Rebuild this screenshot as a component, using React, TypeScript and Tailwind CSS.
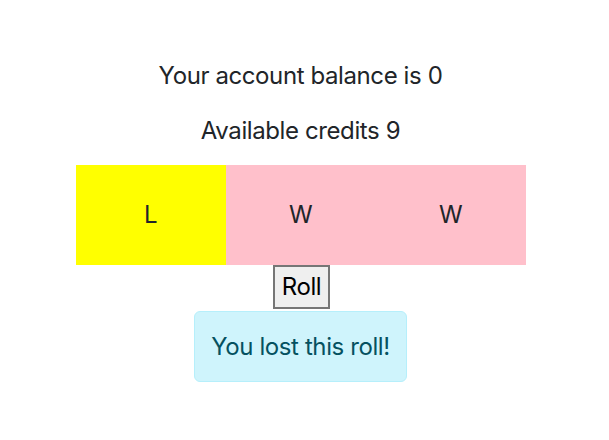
const cells = [
  { label: "L", bg: "bg-[#ffff00]" },
  { label: "W", bg: "bg-[#ffc0cb]" },
  { label: "W", bg: "bg-[#ffc0cb]" },
];

export default function App() {
  return (
    <div className="min-h-screen bg-white font-['Inter',sans-serif] tracking-[-0.4px] text-[#212529] text-[24px] leading-[36px] flex flex-col items-center pt-[58px] pr-[8px]">
      <p className="mb-[19px]">Your account balance is 0</p>
      <p className="mb-[16px]">Available credits 9</p>
      <div className="grid grid-cols-3 w-[450px]">
        {cells.map((c, i) => (
          <div key={i} className={`${c.bg} h-[100px] flex items-center justify-center`}>
            {c.label}
          </div>
        ))}
      </div>
      <button className="ml-[2px] border-2 border-[#767676] bg-[#efefef] text-black px-[7px] py-[2px] leading-[36px]">
        Roll
      </button>
      <div className="mt-[2px] px-4 py-4 leading-[37px] rounded-md border border-[#b6effb] bg-[#cff4fc] text-[#055160]">
        You lost this roll!
      </div>
    </div>
  );
}
